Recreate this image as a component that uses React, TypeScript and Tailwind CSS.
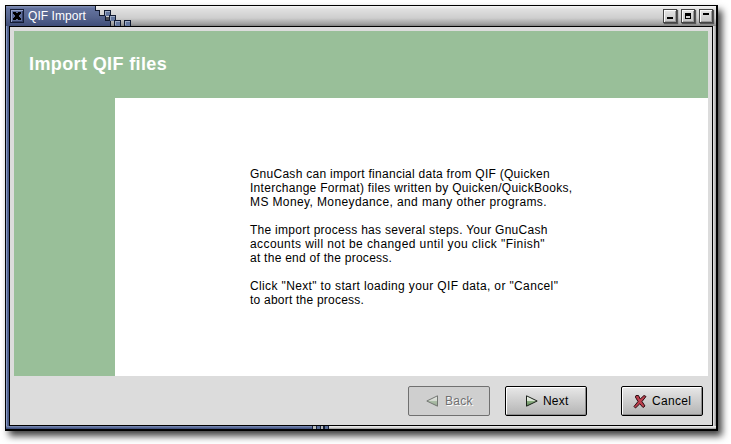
import React from "react";

const WindowButton = ({ children }: { children: React.ReactNode }) => (
  <button className="h-[14px] w-[14px] border border-[#444] bg-gradient-to-b from-[#e6e6e6] to-[#c4c4c4] shadow-[inset_1px_1px_0_#fafafa,inset_-1px_-1px_0_#9a9a9a,1px_1px_1px_#555]">
    <svg width="12" height="12" className="block" shapeRendering="crispEdges">{children}</svg>
  </button>
);

const lines = [
  { text: "GnuCash can import financial data from QIF (Quicken", track: "tracking-[0.27px]" },
  { text: "Interchange Format) files written by Quicken/QuickBooks,", track: "tracking-[0.29px]" },
  { text: "MS Money, Moneydance, and many other programs.", track: "tracking-[0.385px]" },
  { text: "", track: "" },
  { text: "The import process has several steps. Your GnuCash", track: "tracking-[0.27px]" },
  { text: "accounts will not be changed until you click \"Finish\"", track: "tracking-[0.42px]" },
  { text: "at the end of the process.", track: "tracking-[0.26px]" },
  { text: "", track: "" },
  { text: "Click \"Next\" to start loading your QIF data, or \"Cancel\"", track: "tracking-[0.365px]" },
  { text: "to abort the process.", track: "tracking-[0.22px]" },
];

function TitleBar() {
  return (
    <div className="flex h-5 items-start bg-[linear-gradient(to_bottom,#f6f6f6_0,#e0e0e0_15%,#cecece_60%,#a0a0a0_90%,#808080_100%)]">
      <div className="flex h-5 w-[88px] items-start bg-[linear-gradient(to_bottom,#8492b8_0,#64739f_12%,#56658f_55%,#3f4d79_100%)] pl-[4px] pt-[3px]">
        <button className="h-[14px] w-[14px] border border-[#141c34] bg-[#5e6e9a] shadow-[inset_1px_1px_0_#98a6cc,inset_-1px_-1px_0_#333f66]">
          <svg width="12" height="12" className="block" shapeRendering="crispEdges">
            <path d="M2 2H5V3H7V2H10V4H9V5H8V7H9V8H10V10H7V9H5V10H2V8H3V7H4V5H3V4H2Z" fill="#000" />
          </svg>
        </button>
        <span className="ml-[4px] whitespace-nowrap text-[12px] leading-[14px] tracking-[0.05px] text-white">QIF Import</span>
      </div>
      <svg width="40" height="20" className="block shrink-0" shapeRendering="crispEdges">
        <defs>
          <linearGradient id="title" x1="0" y1="0" x2="0" y2="20" gradientUnits="userSpaceOnUse">
            <stop stopColor="#8492b8" /><stop offset=".12" stopColor="#64739f" />
            <stop offset=".55" stopColor="#56658f" /><stop offset="1" stopColor="#3f4d79" />
          </linearGradient>
        </defs>
        <path d="M0 0H1V4H6V9H11V14H17V20H0Z" fill="url(#title)" />
        <path d="M1.5 0V4.5H5.5V9.5H11.5V14.5H16.5V20" fill="none" stroke="#10182c" />
        {[[10, 4], [15, 9], [20, 14], [30, 14]].map(([x, y]) => (
          <g key={x} transform={`translate(${x} ${y})`}>
            <path d="M0 0H7V6H0Z" fill="#111a30" />
            <path d="M1 1H6V6H1Z" fill="#64779f" />
            <path d="M1 1H6V2H2V5H1Z" fill="#9dabc5" />
          </g>
        ))}
        <path d="M12 11H15V14H12Z" fill="#4a4d55" />
      </svg>
      <div className="ml-auto flex gap-[4px] pr-[3px] pt-[3px]">
        <WindowButton><path d="M3 7H9V9H3Z" /></WindowButton>
        <WindowButton><path fillRule="evenodd" d="M3 3H9V9H3ZM4 6V8H8V6Z" /></WindowButton>
        <WindowButton><path d="M3 3H9V5H3Z" /></WindowButton>
      </div>
    </div>
  );
}

function Arrow({ back = false }: { back?: boolean }) {
  return (
    <svg width="14" height="12" className={back ? "block -scale-x-100 opacity-50" : "block"}>
      <defs>
        <linearGradient id="arrow" x1="0" y1="0" x2="0" y2="1">
          <stop offset=".15" stopColor="#edf2e9" /><stop offset=".48" stopColor="#d8e4d2" />
          <stop offset=".52" stopColor="#8caf83" /><stop offset="1" stopColor="#5c8453" />
        </linearGradient>
      </defs>
      <path d="M1.5 .8L12.2 6L1.5 11.2Z" fill="url(#arrow)" stroke="#1b211a" />
    </svg>
  );
}

const raised =
  "flex h-[30px] w-[82px] items-center rounded-[2px] border border-black bg-gradient-to-b from-[#e8e8e8] to-[#b4b4b4] text-[12px] leading-[14px] shadow-[inset_1px_1px_0_#fff,inset_-1px_-1px_0_#8e8e8e]";

export default function App() {
  return (
    <div className="h-[444px] w-[731px] overflow-hidden bg-white pl-[5px] pt-[5px] font-['Liberation_Sans',Arial,sans-serif] text-black">
      <div className="flex h-[426px] w-[713px] flex-col border-b-2 border-l border-r-2 border-t border-black shadow-[4px_5px_7px_0px_rgba(0,0,0,0.75)]">
        <TitleBar />
        <div className="flex min-h-0 flex-1">
          <div className="w-[3px] bg-[linear-gradient(to_right,#8a9bc4_0,#8a9bc4_33%,#596b98_34%,#4a5986_100%)]" />
          <div className="flex flex-1 flex-col border border-black bg-[#dcdcdc] px-[4px] pt-[4px]">
            <header className="flex h-[67px] items-center bg-[#99bf99] pb-[2px] pl-[15px]">
              <h1 className="whitespace-nowrap text-[18px] font-bold leading-[20px] tracking-[0.38px] text-white">Import QIF files</h1>
            </header>
            <div className="flex h-[278px]">
              <aside className="w-[101px] bg-[#99bf99]" />
              <main className="flex-1 bg-white pl-[135px] pt-[69px]">
                {lines.map((line, i) => (
                  <div key={i} className="h-[14px] whitespace-nowrap text-[12px] leading-[14px]">
                    <span className={line.track}>{line.text}</span>
                  </div>
                ))}
              </main>
            </div>
            <footer className="flex justify-end pr-[5px] pt-[10px]">
              <button className="flex h-[30px] w-[82px] items-center rounded-[2px] border border-[#707070] bg-[#cfcfcf] pl-[16px] text-[12px] leading-[14px] text-[#707070]">
                <Arrow back />
                <span className="ml-[6px] tracking-[0.3px] [text-shadow:1px_1px_0_#fff]">Back</span>
              </button>
              <button className={`${raised} ml-[15px] pl-[19px]`}>
                <Arrow />
                <span className="ml-[4px] tracking-[0.2px]">Next</span>
              </button>
              <button className={`${raised} ml-[34px] pl-[11px]`}>
                <svg width="14" height="15" className="block">
                  <path d="M3 1.5L5.5 1.5L7.2 5L11 1.5L13 2.5L9 7.5L12 12L10 13.5L6.8 9.8L2.5 14L1 12.5L5 7.5L2.4 3Z" fill="#bd3f4d" stroke="#2b0d11" />
                </svg>
                <span className="ml-[5px] tracking-[0.3px]">Cancel</span>
              </button>
            </footer>
          </div>
          <div className="w-[3px] bg-[linear-gradient(to_right,#e8e8e8_0,#d0d0d0_34%,#969696_100%)]" />
        </div>
        <div className="flex h-[3px]">
          <div className="w-[306px] bg-[linear-gradient(to_bottom,#8292ba,#596b98_50%,#3c4b76)]" />
          <svg width="17" height="3" className="block" shapeRendering="crispEdges">
            <path d="M0 0H17V3H0Z" fill="#17223a" />
            <path d="M1 0H4V3H1ZM9 0H11V3H9Z" fill="#b9bcbc" />
            <path d="M5 0H8V3H5ZM13 0H16V3H13Z" fill="#5d7099" />
          </svg>
          <div className="flex-1 bg-[linear-gradient(to_bottom,#f4f4f4,#d3d3d3_50%,#949494)]" />
        </div>
      </div>
    </div>
  );
}
